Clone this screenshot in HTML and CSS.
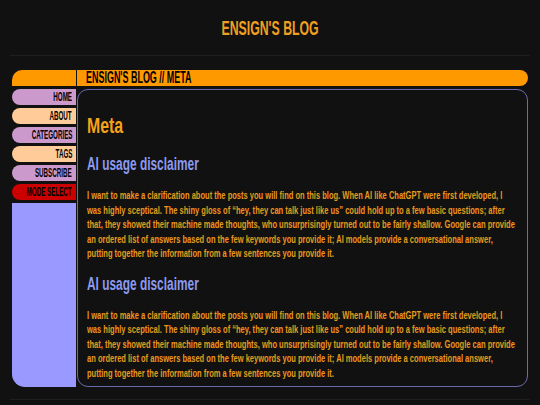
FILE: index.html
```html
<!DOCTYPE html>
<html lang="en">
<head>
<meta charset="utf-8">
<title>Ensign's Blog - Meta</title>
<link rel="stylesheet" href="styles.css">
</head>
<body>
<header class="site-header">
  <h1 class="site-title"><span class="sq-title">ENSIGN'S BLOG</span></h1>
</header>
<div class="frame">
  <div class="side">
    <div class="side-cap"></div>
    <nav class="nav">
      <a class="nav-btn lilac" href="#"><span class="sq-nav">HOME</span></a>
      <a class="nav-btn peach" href="#"><span class="sq-nav">ABOUT</span></a>
      <a class="nav-btn lilac" href="#"><span class="sq-nav">CATEGORIES</span></a>
      <a class="nav-btn peach" href="#"><span class="sq-nav">TAGS</span></a>
      <a class="nav-btn lilac" href="#"><span class="sq-nav">SUBSCRIBE</span></a>
      <a class="nav-btn red" href="#"><span class="sq-nav">MODE SELECT</span></a>
    </nav>
    <div class="side-fill"></div>
  </div>
  <div class="main">
    <div class="topbar"><span class="sq-bar">ENSIGN'S BLOG // META</span></div>
    <section class="content">
      <h2 class="page-title"><span class="sq-h1">Meta</span></h2>
      <h3 class="sub"><span class="sq-h2">AI usage disclaimer</span></h3>
      <p class="text">I want to make a clarification about the posts you will find on this blog. When AI like ChatGPT were first developed, I was highly sceptical. The shiny gloss of “hey, they can talk just like us” could hold up to a few basic questions; after that, they showed their machine made thoughts, who unsurprisingly turned out to be fairly shallow. Google can provide an ordered list of answers based on the few keywords you provide it; AI models provide a conversational answer, putting together the information from a few sentences you provide it.</p>
      <h3 class="sub"><span class="sq-h2">AI usage disclaimer</span></h3>
      <p class="text">I want to make a clarification about the posts you will find on this blog. When AI like ChatGPT were first developed, I was highly sceptical. The shiny gloss of “hey, they can talk just like us” could hold up to a few basic questions; after that, they showed their machine made thoughts, who unsurprisingly turned out to be fairly shallow. Google can provide an ordered list of answers based on the few keywords you provide it; AI models provide a conversational answer, putting together the information from a few sentences you provide it.</p>
    </section>
  </div>
</div>
<div class="bottom-rule"></div>
</body>
</html>
```
FILE: styles.css
```css
* { box-sizing: border-box; }
body {
  margin: 0;
  background: #111111;
  font-family: "Liberation Sans", Arial, sans-serif;
  font-weight: bold;
  color: #e8991c;
}
.site-header {
  margin: 0 10px;
  height: 56px;
  padding-top: 2px;
  border-bottom: 1px solid #1e1e1e;
  display: flex;
  align-items: center;
  justify-content: center;
}
.site-title {
  margin: 0;
  font-size: 19.5px;
  font-weight: bold;
  color: #f0a020;
}
.sq-title {
  display: inline-block;
  transform: scaleX(0.63);
  transform-origin: center;
}
.frame {
  margin: 14px 12px 0 12px;
  display: flex;
  gap: 1px;
  height: 317px;
}
.side {
  width: 64px;
  display: flex;
  flex-direction: column;
  gap: 3px;
}
.side-cap {
  height: 16px;
  background: #ff9900;
  border-radius: 10px 0 0 0;
}
.nav {
  display: flex;
  flex-direction: column;
  gap: 3px;
}
.nav-btn {
  height: 16px;
  border-radius: 8px 0 0 8px;
  display: flex;
  align-items: center;
  justify-content: flex-end;
  padding-right: 4px;
  font-size: 12px;
  line-height: 16px;
  font-weight: bold;
  color: #000;
  text-decoration: none;
  white-space: nowrap;
}
.sq-nav {
  display: inline-block;
  transform: scaleX(0.52);
  transform-origin: right center;
}
.lilac { background: #cc99cc; }
.peach { background: #ffcc99; }
.red { background: #cc0000; }
.side-fill {
  flex: 1;
  background: #9999ff;
  border-radius: 0 0 0 13px;
}
.main {
  flex: 1;
  min-width: 0;
  display: flex;
  flex-direction: column;
  gap: 3px;
}
.topbar {
  height: 16px;
  background: #ff9900;
  border-radius: 0 8px 8px 0;
  color: #000;
  font-weight: bold;
  font-size: 16px;
  line-height: 16px;
  padding-left: 9px;
  white-space: nowrap;
  overflow: hidden;
}
.sq-bar {
  display: inline-block;
  transform: scaleX(0.56);
  transform-origin: left center;
}
.content {
  flex: 1;
  border: 1px solid #6c6aae;
  border-radius: 11px;
  padding: 23px 9px 0 9px;
  overflow: hidden;
}
.page-title {
  margin: 0 0 15px 0;
  font-size: 22px;
  line-height: 26px;
  font-weight: bold;
  color: #f5a218;
}
.sq-h1 {
  display: inline-block;
  transform: scaleX(0.72);
  transform-origin: left center;
}
.sub {
  margin: 0 0 14px 0;
  font-size: 17.5px;
  line-height: 20px;
  font-weight: bold;
  color: #8c9af0;
  white-space: nowrap;
}
.sq-h2 {
  display: inline-block;
  transform: scaleX(0.68);
  transform-origin: left center;
}
.text {
  margin: 0 0 13px 0;
  font-size: 11.5px;
  line-height: 14.5px;
  font-weight: bold;
  color: #e8991c;
  width: calc(100% / 0.655);
  transform: scaleX(0.655);
  transform-origin: left top;
}
.bottom-rule {
  margin: 12px 10px 0 10px;
  border-top: 1px solid #1e1e1e;
}
```
